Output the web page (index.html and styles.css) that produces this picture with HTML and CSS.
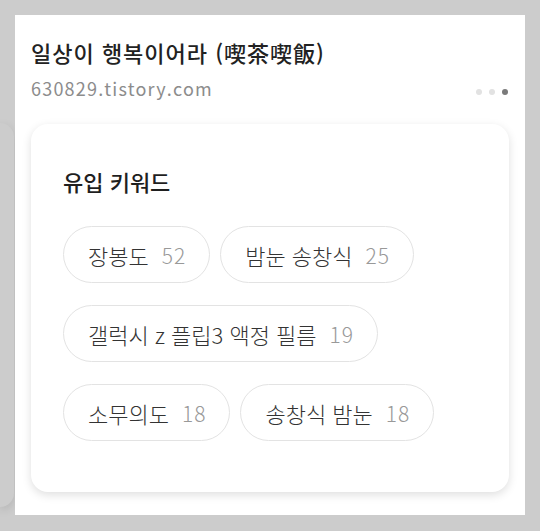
FILE: index.html
```html
<!DOCTYPE html>
<html lang="ko">
  <head>
    <meta charset="utf-8">
    <meta name="viewport" content="width=device-width, initial-scale=1">
    <title>유입 키워드</title>
    <link rel="stylesheet" href="styles.css">
  </head>
  <body>
    <div class="stage">
      <div class="prev-slide"></div>
      <section class="blog-panel">
        <h1 class="blog-title">일상이 행복이어라 (喫茶喫飯)</h1>
        <div class="blog-meta">
          <span class="blog-url">630829.tistory.com</span>
          <span class="dots">
            <i class="dot"></i>
            <i class="dot"></i>
            <i class="dot dot-on"></i>
          </span>
        </div>
        <div class="keyword-card">
          <h2 class="card-title">유입 키워드</h2>
          <ul class="keywords">
            <li class="keyword">장봉도<span class="count">52</span></li>
            <li class="keyword">밤눈 송창식<span class="count">25</span></li>
            <li class="keyword">갤럭시 z 플립3 액정 필름<span class="count">19</span></li>
            <li class="keyword">소무의도<span class="count">18</span></li>
            <li class="keyword">송창식 밤눈<span class="count">18</span></li>
          </ul>
        </div>
      </section>
    </div>
  </body>
</html>
```

FILE: styles.css
```css
html, body {
  margin: 0;
  padding: 0;
  background: #cccccc;
  font-family: "Noto Sans CJK KR", "Noto Sans", sans-serif;
  color: #222;
}
.stage {
  display: flex;
  padding: 15px 15px 16px 0;
  height: 500px;
}
.prev-slide {
  flex: none;
  width: 14px;
  margin-top: 108px;
  height: 384px;
  background: #cccccc;
  border-radius: 0 16px 16px 0;
  box-shadow: 0 3px 10px rgba(0, 0, 0, 0.12);
}
.blog-panel {
  flex: 1;
  margin-left: 1px;
  background: #fff;
  padding: 21px 16px 0;
}
.blog-title {
  margin: 0;
  font-size: 22px;
  font-weight: 500;
  line-height: 32px;
  letter-spacing: 1px;
  color: #222;
}
.blog-meta {
  display: flex;
  align-items: center;
  justify-content: space-between;
  margin-top: 7px;
}
.blog-url {
  font-size: 18px;
  line-height: 26px;
  letter-spacing: 1.2px;
  color: #8c8c8c;
}
.dots {
  display: flex;
  gap: 7px;
  margin-top: 8px;
  margin-right: 1px;
}
.dot {
  width: 6px;
  height: 6px;
  border-radius: 50%;
  background: #e2e2e2;
}
.dot-on {
  background: #7a7a7a;
}
.keyword-card {
  margin-top: 23px;
  background: #fff;
  border-radius: 17px;
  padding: 42px 32px 51px;
  box-shadow: 0 3px 10px rgba(0, 0, 0, 0.13);
}
.card-title {
  margin: 0;
  font-size: 22px;
  font-weight: 500;
  line-height: 30px;
  color: #1f1f1f;
}
.keywords {
  list-style: none;
  margin: 30px 0 0;
  padding: 0;
  display: flex;
  flex-wrap: wrap;
  gap: 22px 10px;
}
.keyword {
  box-sizing: border-box;
  height: 57px;
  display: inline-flex;
  align-items: center;
  padding: 0 23px 0 24px;
  border: 1px solid #e3e3e3;
  border-radius: 29px;
  font-size: 22px;
  font-weight: 300;
  color: #333;
}
.count {
  margin-left: 13px;
  font-size: 21px;
  color: #999;
  letter-spacing: 1px;
}
```
